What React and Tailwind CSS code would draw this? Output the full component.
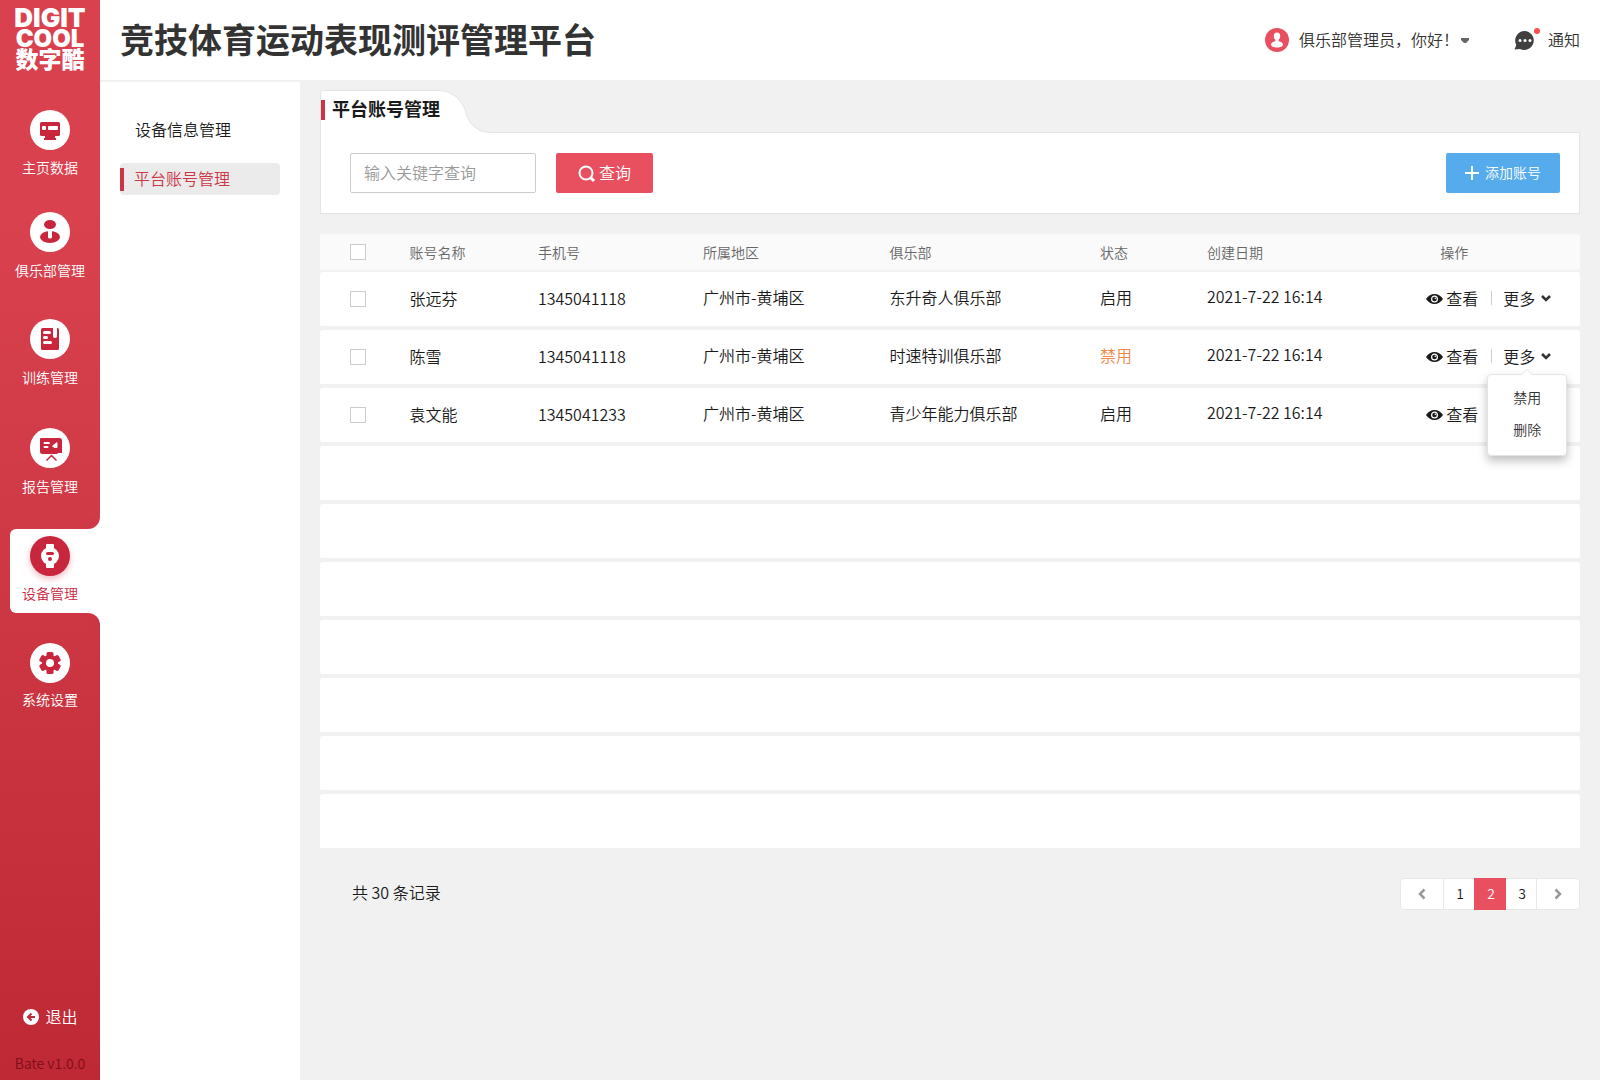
import React from "react";

const NAV = [
  { label: "主页数据", icon: "home", space: "mt-5 gap-[7px]" },
  { label: "俱乐部管理", icon: "club", space: "mt-[17px] gap-2" },
  { label: "训练管理", icon: "book", space: "mt-[22px] gap-2" },
  { label: "报告管理", icon: "report", space: "mt-6 gap-2" },
  { label: "设备管理", icon: "watch", active: true },
  { label: "系统设置", icon: "gear", space: "mt-5 gap-[6px]" },
];

function NavIcon({ name }) {
  const red = "#c7263d";
  return (
    <svg viewBox="0 0 40 40" className="block size-10" aria-hidden="true">
      {name === "home" && (
        <g fill={red}>
          <rect x="10" y="12" width="20" height="14" rx="1.5" />
          <path d="M15 26h10v2h1v2H14v-2h1z" />
          <rect x="12" y="16" width="4" height="4" rx="1" fill="#fff" />
          <rect x="18" y="16" width="10" height="4" rx="1" fill="#fff" />
        </g>
      )}
      {name === "club" && (
        <g fill={red}>
          <ellipse cx="20" cy="12.5" rx="6" ry="4.5" />
          <ellipse cx="20" cy="25" rx="10" ry="6" />
          <path d="M18 18h4v7a2 1.5 0 0 1-4 0z" fill="#fff" />
        </g>
      )}
      {name === "book" && (
        <g fill={red}>
          <rect x="11" y="9" width="18" height="22" rx="1.5" />
          <path d="M23 8h4v9a2 2 0 0 1-4 0z" fill="#fff" />
          <path d="M14.5 13.5h5M14.5 18.5h2M14.5 23.5h6" stroke="#fff" strokeWidth="3" strokeLinecap="round" />
        </g>
      )}
      {name === "report" && (
        <g fill={red}>
          <path d="M11 10h18.5a2.5 2.5 0 0 1 2.5 2.5V25h-4l-1 1H12.5a2.5 2.5 0 0 1-2.5-2.5V11a1 1 0 0 1 1-1z" />
          <path d="M14.5 15h4.5M14.5 19h3" stroke="#fff" strokeWidth="2" strokeLinecap="round" />
          <path d="M22.500 18L27 14.500v5h-3z" fill="#fff" stroke="#fff" strokeLinejoin="round" />
          <path d="M16.5 32.5l5-5 5 5" fill="none" stroke={red} strokeWidth="1.5" />
        </g>
      )}
      {name === "watch" && (
        <g fill="#fff">
          <rect x="16" y="8" width="8" height="24" rx="1" />
          <circle cx="20" cy="20" r="9" />
          <rect x="16" y="16" width="8" height="3" rx="1.5" fill={red} />
          <circle cx="20" cy="23" r="2" fill={red} />
        </g>
      )}
      {name === "gear" && (
        <g fill={red}>
          <circle cx="20" cy="20" r="8" />
          {[0, 60, 120].map((a) => (
            <rect key={a} x="16.5" y="9" width="7" height="22" rx="1.5" transform={`rotate(${a} 20 20)`} />
          ))}
          <circle cx="20" cy="20" r="4" fill="#fff" />
        </g>
      )}
    </svg>
  );
}

function Sidebar() {
  return (
    <aside className="flex w-[100px] shrink-0 flex-col bg-linear-to-b from-[#d9414f] from-20% to-[#bf2935] text-white">
      <div className="flex h-20 flex-col items-center pt-2 font-['Inter','Noto_Sans_CJK_SC',sans-serif] font-black">
        <span className="text-[26px] leading-[20px]">DIGIT</span>
        <span className="text-[24px] leading-[22px]">COOL</span>
        <span className="text-[23px] leading-[21px]">数字酷</span>
      </div>
      <nav className="flex flex-col">
        {NAV.map((n) =>
          n.active ? (
            <div key={n.label} className="relative mt-[26px] ml-[10px] h-[84px] rounded-l-md bg-white">
              <div className="absolute right-0 bottom-full size-3 bg-white">
                <div className="size-3 rounded-br-[12px] bg-[#cf3846]" />
              </div>
              <div className="absolute top-full right-0 size-3 bg-white">
                <div className="size-3 rounded-tr-[12px] bg-[#cc3543]" />
              </div>
              <a href="#" className="mr-[10px] flex flex-col items-center gap-[7px] pt-[7px] text-sm leading-5 text-[#c7263d]">
                <span className="rounded-full bg-[#c7263d] shadow-[0_3px_6px_rgba(199,38,61,0.3)]">
                  <NavIcon name={n.icon} />
                </span>
                {n.label}
              </a>
            </div>
          ) : (
            <a key={n.label} href="#" className={`flex h-[85px] flex-col items-center pt-[10px] text-sm leading-5 ${n.space}`}>
              <span className="rounded-full bg-white">
                <NavIcon name={n.icon} />
              </span>
              {n.label}
            </a>
          )
        )}
      </nav>
      <button className="mt-auto flex items-center justify-center gap-[6px] pl-px leading-6">
        <svg viewBox="0 0 16 16" className="mt-0.5 size-4" aria-hidden="true">
          <circle cx="8" cy="8" r="8" fill="#fff" />
          <path d="M12 8H5M8.5 4.5L5 8l3.5 3.5" fill="none" stroke="#c02a37" strokeWidth="2" />
        </svg>
        退出
      </button>
      <p className="mt-[23px] mb-[5px] text-center text-sm leading-6 text-[#7f0d18]">Bate v1.0.0</p>
    </aside>
  );
}

function Header() {
  return (
    <header className="flex h-20 shrink-0 items-center bg-white px-5">
      <h1 className="pb-0.5 text-[34px] leading-none font-bold text-[#333]">竞技体育运动表现测评管理平台</h1>
      <button className="ml-auto flex items-center leading-6 text-[#333]">
        <svg viewBox="0 0 24 24" className="mr-[10px] size-6" aria-hidden="true">
          <circle cx="12" cy="12" r="12" fill="#e8505f" />
          <path d="M12 4.500c2.200 0 3.200 1.500 3.200 3.500 0 1.700-.7 3-1.500 3.800v1.400c2.500.6 4.300 1.800 4.300 3.600 0 1.600-2.500 2.700-6 2.700s-6-1.100-6-2.700c0-1.800 1.800-3 4.300-3.600v-1.400C9.500 11 8.800 9.700 8.800 8c0-2 1-3.500 3.200-3.500z" fill="#fff" />
        </svg>
        <span className="pb-0.5">俱乐部管理员，你好！</span>
        <svg viewBox="0 0 8 6" className="mt-px ml-0.5 h-[6px] w-2" aria-hidden="true">
          <path d="M0 0h8v2L5 5H3L0 2z" fill="#666" />
        </svg>
      </button>
      <button className="ml-[45px] flex items-center gap-2 leading-6 text-[#333]">
        <svg viewBox="0 0 26 24" className="h-6 w-[26px]" aria-hidden="true">
          <path d="M10.5 3A9.5 9.5 0 1 1 6 21l-5.500 .5L2.300 17A9.500 9.500 0 0 1 10.500 3z" fill="#404040" />
          <circle cx="6" cy="12.5" r="1.5" fill="#fff" />
          <circle cx="11" cy="12.5" r="1.5" fill="#fff" />
          <circle cx="16" cy="12.5" r="1.5" fill="#fff" />
          <circle cx="23" cy="3" r="3" fill="#ff4d4f" />
        </svg>
        <span className="pb-0.5">通知</span>
      </button>
    </header>
  );
}

function SearchPanel() {
  return (
    <section>
      <div className="relative z-10 -mb-px flex h-[43px] items-start">
        <svg viewBox="0 0 180 43" className="absolute top-0 left-0 h-[43px] w-[180px]" aria-hidden="true">
          <path d="M.5 43V3.5a3 3 0 0 1 3-3H118c14 0 24 9 28 22 3 11 10 20 26 20V43z" fill="#fff" />
          <path d="M.5 43V3.5a3 3 0 0 1 3-3H118c14 0 24 9 28 22 3 11 10 20 26 20h8" fill="none" stroke="#e4e4e4" />
        </svg>
        <h2 className="relative mt-[10px] ml-px border-l-4 border-[#cc3545] pb-1 pl-[7px] text-lg leading-4 font-bold text-[#1a1a1a]">平台账号管理</h2>
      </div>
      <form className="flex h-[82px] items-center border border-[#e4e4e4] bg-white pr-[19px] pl-[29px]" onSubmit={(e) => e.preventDefault()}>
        <input
          aria-label="输入关键字查询"
          placeholder="输入关键字查询"
          className="h-10 w-[186px] rounded-xs border border-[#ccc] px-[13px] pb-0.5 placeholder:text-[#999]"
        />
        <button className="ml-5 flex h-10 w-[97px] items-center justify-center gap-[3px] rounded-xs bg-[#e8505f] text-white">
          <svg viewBox="0 0 18 18" className="mt-0.5 size-[18px]" fill="none" stroke="#fff" aria-hidden="true">
            <circle cx="8" cy="8" r="6.5" strokeWidth="2" />
            <path d="M12.5 12.5l3.500 3.500" strokeWidth="3" />
          </svg>
          <span className="pb-0.5">查询</span>
        </button>
        <button type="button" className="ml-auto flex h-10 w-[114px] items-center justify-center gap-[6px] rounded-xs bg-[#55abeb] text-sm text-white">
          <svg viewBox="0 0 14 14" className="size-[14px]" aria-hidden="true">
            <path d="M7 0v14M0 7h14" stroke="#fff" strokeWidth="2" />
          </svg>
          <span className="pb-0.5">添加账号</span>
        </button>
      </form>
    </section>
  );
}

const ROWS = [
  ["张远芬", "1345041118", "广州市-黄埔区", "东升奇人俱乐部", "启用", "2021-7-22 16:14"],
  ["陈雪", "1345041118", "广州市-黄埔区", "时速特训俱乐部", "禁用", "2021-7-22 16:14"],
  ["袁文能", "1345041233", "广州市-黄埔区", "青少年能力俱乐部", "启用", "2021-7-22 16:14"],
];

const CELL_PAD = ["pb-0.5", "pb-0.5", "pb-1", "pb-1", "pb-1", "pb-1.5"];

function Tick({ label }) {
  return (
    <input type="checkbox" aria-label={label} className="ml-[30px] block size-4 appearance-none border border-[#ccc] bg-white checked:bg-[#e8505f]" />
  );
}

function Actions({ open }) {
  return (
    <div className="flex items-center whitespace-nowrap">
      <button className="flex items-center gap-[3px]">
        <svg viewBox="0 0 17 10" className="mt-0.5 h-[10px] w-[17px]" aria-hidden="true">
          <path d="M0 5Q3.5 0 8.5 0t8.5 5q-3.5 5-8.5 5T0 5z" fill="#1a1a1a" />
          <circle cx="8.5" cy="5" r="2.9" fill="none" stroke="#fff" strokeWidth="1.2" />
          <circle cx="9.3" cy="4.2" r=".8" fill="#fff" />
        </svg>
        查看
      </button>
      <span className="mr-[11px] ml-[13px] h-[14px] w-px bg-[#ccc]" />
      <div className="relative">
        <button className="flex items-center gap-[6px]" aria-expanded={open}>
          更多
          <svg viewBox="0 0 10 7" className="h-[7px] w-[10px]" aria-hidden="true">
            <path d="M1 1l4 4 4-4" fill="none" stroke="#333" strokeWidth="2.5" />
          </svg>
        </button>
        {open && (
          <div className="absolute top-[30px] -left-4 z-20 flex h-[82px] w-20 flex-col items-center rounded-sm border border-[#e4e4e4] bg-white pt-[6px] text-sm shadow-[0_5px_10px_rgba(0,0,0,0.25)]">
            <svg viewBox="0 0 12 7" className="absolute -top-[6px] left-[33px] h-[7px] w-3" aria-hidden="true">
              <path d="M0 6.5L6 .5l6 6V7H0z" fill="#fff" />
              <path d="M0 6.5L6 .5l6 6" fill="none" stroke="#e4e4e4" />
            </svg>
            <button className="h-8 text-[#333]">禁用</button>
            <button className="h-8 text-[#333]">删除</button>
          </div>
        )}
      </div>
    </div>
  );
}

function AccountTable() {
  return (
    <table className="mt-5 w-full table-fixed border-separate border-spacing-0 text-left text-[#1a1a1a]">
      <colgroup>
        <col className="w-[7.1%]" />
        <col className="w-[10.2%]" />
        <col className="w-[13.1%]" />
        <col className="w-[14.8%]" />
        <col className="w-[16.7%]" />
        <col className="w-[8.5%]" />
        <col className="w-[17.4%]" />
        <col />
      </colgroup>
      <thead>
        <tr className="h-[38px] text-sm text-[#666] *:border-b-2 *:border-transparent *:bg-[#fafafa] *:bg-clip-padding *:p-0 *:font-[350]">
          <th className="rounded-tl-xs rounded-bl-[2px_4px]"><Tick label="全选" /></th>
          <th>账号名称</th>
          <th>手机号</th>
          <th>所属地区</th>
          <th>俱乐部</th>
          <th>状态</th>
          <th>创建日期</th>
          <th className="rounded-tr-xs rounded-br-[2px_4px] pl-[14px]!">操作</th>
        </tr>
      </thead>
      <tbody>
        {ROWS.map((r, i) => (
          <tr key={i} className="h-[58px] *:border-b-4 *:border-transparent *:bg-white *:bg-clip-padding">
            <td className="rounded-tl-xs rounded-bl-[2px_6px]"><Tick label={r[0]} /></td>
            {r.map((c, j) => (
              <td key={j} className={`${CELL_PAD[j]} ${c === "禁用" ? "text-[#f0874a]" : ""}`}>{c}</td>
            ))}
            <td className="rounded-tr-xs rounded-br-[2px_6px] pb-0.5"><Actions open={i === 1} /></td>
          </tr>
        ))}
        {[0, 1, 2, 3, 4, 5, 6].map((i) => (
          <tr key={i} className="h-[58px]">
            <td colSpan={8} className="rounded-t-xs rounded-b-[2px_6px] border-b-4 border-transparent bg-white bg-clip-padding p-0" />
          </tr>
        ))}
      </tbody>
    </table>
  );
}

function Pager() {
  return (
    <footer className="mt-[26px] flex items-center justify-between pl-8 text-[#1a1a1a]">
      <p className="pb-[5px]">共 30 条记录</p>
      <nav className="flex h-8 rounded-sm border border-[#e8e8e8] bg-white text-sm" aria-label="分页">
        <button aria-label="上一页" className="flex w-[42px] items-center justify-center">
          <svg viewBox="0 0 8 12" className="h-3 w-2" fill="none" stroke="#999" strokeWidth="2.5" aria-hidden="true"><path d="M6.5 1.5L2 6l4.5 4.5" /></svg>
        </button>
        <button className="w-[31px] border-l border-[#e8e8e8] pb-0.5 pl-0.5">1</button>
        <button className="-my-px w-8 bg-[#e8505f] pb-0.5 pl-0.5 text-white" aria-current="page">2</button>
        <button className="w-[31px] border-r border-[#e8e8e8] pb-0.5 pl-0.5">3</button>
        <button aria-label="下一页" className="flex w-[42px] items-center justify-center">
          <svg viewBox="0 0 8 12" className="h-3 w-2" fill="none" stroke="#999" strokeWidth="2.5" aria-hidden="true"><path d="M1.5 1.5L6 6l-4.5 4.5" /></svg>
        </button>
      </nav>
    </footer>
  );
}

export default function App() {
  return (
    <div className="flex min-h-screen bg-[#f1f1f1] font-['Noto_Sans_CJK_SC',sans-serif] text-base leading-6 font-[350]">
      <Sidebar />
      <div className="flex min-w-0 flex-1 flex-col">
        <Header />
        <div className="flex flex-1">
          <nav className="mt-[2px] flex w-[200px] shrink-0 flex-col gap-[17px] bg-white px-5 pt-8 text-[#1a1a1a]">
            <a href="#" className="flex h-8 items-center pb-0.5 pl-[15px]">设备信息管理</a>
            <a href="#" className="flex h-8 items-center rounded-sm bg-[#ebebeb] text-[#cc3545]">
              <span className="mr-[10px] h-[23px] w-1 bg-[#cc3545]" />
              <span className="pb-0.5">平台账号管理</span>
            </a>
          </nav>
          <main className="min-w-0 flex-1 px-5 pt-[10px]">
            <SearchPanel />
            <AccountTable />
            <Pager />
          </main>
        </div>
      </div>
    </div>
  );
}
